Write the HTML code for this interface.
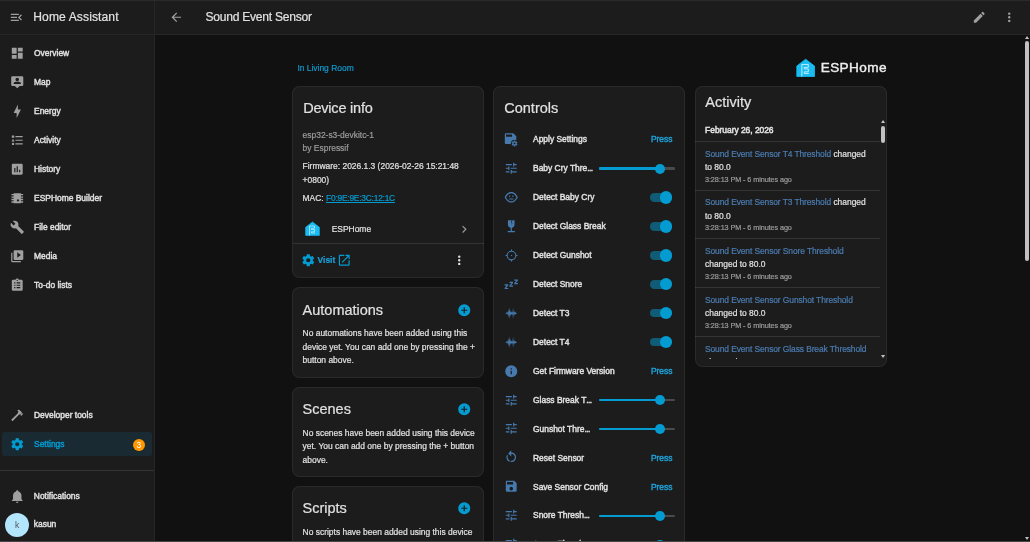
<!DOCTYPE html>
<html><head><meta charset="utf-8"><style>
html,body{margin:0;padding:0;width:1030px;height:542px;overflow:hidden;background:#111;}
body{position:relative;font-family:"Liberation Sans",sans-serif;filter:blur(0.3px);}
.t{position:absolute;white-space:nowrap;line-height:1;-webkit-text-stroke:0.2px;}
.m{-webkit-text-stroke:0.42px;}
svg{display:block}
</style></head><body>
<div style="position:absolute;left:0.00px;top:0.00px;width:1030.00px;height:542.00px;background:#111111;"></div>
<div style="position:absolute;left:154.00px;top:0.00px;width:876.00px;height:34.60px;background:#1c1c1c;"></div>
<div style="position:absolute;left:154.00px;top:33.60px;width:876.00px;height:1.30px;background:rgba(225,225,225,0.055);"></div>
<div style="position:absolute;left:0.00px;top:0.00px;width:154.60px;height:542.00px;background:#1c1c1c;"></div>
<div style="position:absolute;left:153.90px;top:0.00px;width:1.30px;height:542.00px;background:rgba(225,225,225,0.055);"></div>
<div style="position:absolute;left:0.00px;top:33.60px;width:153.90px;height:1.30px;background:rgba(225,225,225,0.055);"></div>
<div style="position:absolute;left:0.00px;top:0.00px;width:1030.00px;height:1.00px;background:#2a2a2a;"></div>
<svg style="position:absolute;left:9.31px;top:9.81px;width:14.79px;height:14.79px" viewBox="0 0 24 24"><path fill="#a0a0a0" d="M21,15.61L19.59,17L14.58,12L19.59,7L21,8.39L17.44,12L21,15.61M3,6H16V8H3V6M3,13V11H13V13H3M3,18V16H16V18H3Z"/></svg>
<div class="t " style="left:33.30px;top:11.37px;font-size:12.080px;color:#e1e1e1;font-weight:400;letter-spacing:0.1px;">Home Assistant</div>
<svg style="position:absolute;left:9.75px;top:46.25px;width:14.50px;height:14.50px" viewBox="0 0 24 24"><path fill="#a0a0a0" d="M13,3V9H21V3M13,21H21V11H13M3,21H11V15H3M3,13H11V3H3V13Z"/></svg>
<div class="t m" style="left:34.00px;top:49.44px;font-size:8.456px;color:#e1e1e1;font-weight:400;">Overview</div>
<svg style="position:absolute;left:9.75px;top:75.24px;width:14.50px;height:14.50px" viewBox="0 0 24 24"><path fill="#a0a0a0" fill-rule="evenodd" d="M12,4.5A3,3 0 0,1 15,7.5A3,3 0 0,1 12,10.5A3,3 0 0,1 9,7.5A3,3 0 0,1 12,4.5M18,15H6V13.5C6,11.8 9.5,11 12,11C14.5,11 18,11.8 18,13.5V15M4,2H20A2,2 0 0,1 22,4V16A2,2 0 0,1 20,18H16L12,22L8,18H4A2,2 0 0,1 2,16V4A2,2 0 0,1 4,2Z"/></svg>
<div class="t m" style="left:34.00px;top:78.43px;font-size:8.456px;color:#e1e1e1;font-weight:400;">Map</div>
<svg style="position:absolute;left:9.75px;top:104.23px;width:14.50px;height:14.50px" viewBox="0 0 24 24"><path fill="#a0a0a0" d="M11 15H6L13 1V9H18L11 23V15Z"/></svg>
<div class="t m" style="left:34.00px;top:107.42px;font-size:8.456px;color:#e1e1e1;font-weight:400;">Energy</div>
<svg style="position:absolute;left:9.75px;top:133.22px;width:14.50px;height:14.50px" viewBox="0 0 24 24"><path fill="#a0a0a0" d="M5,9.5L7.5,14H2.5L5,9.5M3,4H7V8H3V4M5,20A2,2 0 0,0 7,18A2,2 0 0,0 5,16A2,2 0 0,0 3,18A2,2 0 0,0 5,20M9,5V7H21V5H9M9,19H21V17H9V19M9,13H21V11H9V13Z"/></svg>
<div class="t m" style="left:34.00px;top:136.41px;font-size:8.456px;color:#e1e1e1;font-weight:400;">Activity</div>
<svg style="position:absolute;left:9.75px;top:162.21px;width:14.50px;height:14.50px" viewBox="0 0 24 24"><path fill="#a0a0a0" d="M19 3H5C3.9 3 3 3.9 3 5V19C3 20.1 3.9 21 5 21H19C20.1 21 21 20.1 21 19V5C21 3.9 20.1 3 19 3M9 17H7V10H9V17M13 17H11V7H13V17M17 17H15V13H17V17Z"/></svg>
<div class="t m" style="left:34.00px;top:165.40px;font-size:8.456px;color:#e1e1e1;font-weight:400;">History</div>
<svg style="position:absolute;left:9.75px;top:191.20px;width:14.50px;height:14.50px" viewBox="0 0 24 24"><path fill="#a0a0a0" fill-rule="evenodd" d="M6 3.8H18V20.2H6Z M2.3 4.8H6V7.2H2.3Z M2.3 9H6V11.2H2.3Z M2.3 13H6V15.2H2.3Z M2.3 17H6V19.4H2.3Z M18 4.8H21.7V7.2H18Z M18 9H21.7V11.2H18Z M18 13H21.7V15.2H18Z M18 17H21.7V19.4H18Z M11.5 14.2H15V17H11.5Z"/></svg>
<div class="t m" style="left:34.00px;top:194.39px;font-size:8.456px;color:#e1e1e1;font-weight:400;">ESPHome Builder</div>
<svg style="position:absolute;left:9.75px;top:220.19px;width:14.50px;height:14.50px" viewBox="0 0 24 24"><path fill="#a0a0a0" d="M22.7,19L13.6,9.9C14.5,7.6 14,4.9 12.1,3C10.1,1 7.1,0.6 4.7,1.7L9,6L6,9L1.6,4.7C0.4,7.1 0.9,10.1 2.9,12.1C4.8,14 7.5,14.5 9.8,13.6L18.9,22.7C19.3,23.1 19.9,23.1 20.3,22.7L22.6,20.4C23.1,20 23.1,19.3 22.7,19Z"/></svg>
<div class="t m" style="left:34.00px;top:223.38px;font-size:8.456px;color:#e1e1e1;font-weight:400;">File editor</div>
<svg style="position:absolute;left:9.75px;top:249.18px;width:14.50px;height:14.50px" viewBox="0 0 24 24"><path fill="#a0a0a0" d="M4,6H2V20A2,2 0 0,0 4,22H18V20H4V6M20,2H8A2,2 0 0,0 6,4V16A2,2 0 0,0 8,18H20A2,2 0 0,0 22,16V4A2,2 0 0,0 20,2M12,14.5V5.5L18,10L12,14.5Z"/></svg>
<div class="t m" style="left:34.00px;top:252.37px;font-size:8.456px;color:#e1e1e1;font-weight:400;">Media</div>
<svg style="position:absolute;left:9.75px;top:278.17px;width:14.50px;height:14.50px" viewBox="0 0 24 24"><path fill="#a0a0a0" d="M19,3H14.82C14.4,1.84 13.3,1 12,1C10.7,1 9.6,1.84 9.18,3H5A2,2 0 0,0 3,5V19A2,2 0 0,0 5,21H19A2,2 0 0,0 21,19V5A2,2 0 0,0 19,3M12,3A1,1 0 0,1 13,4A1,1 0 0,1 12,5A1,1 0 0,1 11,4A1,1 0 0,1 12,3M7,7H9V9H7V7M7,11H9V13H7V11M7,15H9V17H7V15M11,7H17V9H11V7M11,11H17V13H11V11M11,15H17V17H11V15Z"/></svg>
<div class="t m" style="left:34.00px;top:281.36px;font-size:8.456px;color:#e1e1e1;font-weight:400;">To-do lists</div>
<svg style="position:absolute;left:9.65px;top:408.25px;width:14.50px;height:14.50px" viewBox="0 0 24 24"><path fill="#a0a0a0" d="M2 19.63L13.43 8.2L12.72 7.5L14.14 6.07L12 3.89C13.2 2.7 15.09 2.7 16.27 3.89L19.87 7.5L18.45 8.91H21.29L22 9.62L18.45 13.21L17.74 12.5V9.62L16.27 11.04L15.56 10.33L4.13 21.76L2 19.63Z"/></svg>
<div class="t m" style="left:34.00px;top:411.44px;font-size:8.456px;color:#e1e1e1;font-weight:400;">Developer tools</div>
<div style="position:absolute;left:2.40px;top:432.20px;width:149.50px;height:23.80px;background:#192a33;border-radius:2.5px;"></div>
<svg style="position:absolute;left:9.85px;top:436.95px;width:14.50px;height:14.50px" viewBox="0 0 24 24"><path fill="#039bd0" d="M12,15.5A3.5,3.5 0 0,1 8.5,12A3.5,3.5 0 0,1 12,8.5A3.5,3.5 0 0,1 15.5,12A3.5,3.5 0 0,1 12,15.5M19.43,12.97C19.47,12.65 19.5,12.33 19.5,12C19.5,11.67 19.47,11.34 19.43,11L21.54,9.37C21.73,9.22 21.78,8.95 21.66,8.73L19.66,5.27C19.54,5.05 19.27,4.96 19.05,5.05L16.56,6.05C16.04,5.66 15.5,5.32 14.87,5.07L14.5,2.42C14.46,2.18 14.25,2 14,2H10C9.75,2 9.54,2.18 9.5,2.42L9.13,5.07C8.5,5.32 7.96,5.66 7.44,6.05L4.95,5.05C4.73,4.96 4.46,5.05 4.34,5.27L2.34,8.73C2.21,8.95 2.27,9.22 2.46,9.37L4.57,11C4.53,11.34 4.5,11.67 4.5,12C4.5,12.33 4.53,12.65 4.57,12.97L2.46,14.63C2.27,14.78 2.21,15.05 2.34,15.27L4.34,18.73C4.46,18.95 4.73,19.03 4.95,18.95L7.44,17.94C7.96,18.34 8.5,18.68 9.13,18.93L9.5,21.58C9.54,21.82 9.75,22 10,22H14C14.25,22 14.46,21.82 14.5,21.58L14.87,18.93C15.5,18.67 16.04,18.34 16.56,17.94L19.05,18.95C19.27,19.03 19.54,18.95 19.66,18.73L21.66,15.27C21.78,15.05 21.73,14.78 21.54,14.63L19.43,12.97Z"/></svg>
<div class="t m" style="left:34.00px;top:440.14px;font-size:8.456px;color:#039bd0;font-weight:400;">Settings</div>
<div style="position:absolute;left:132.8px;top:438.5px;width:12.2px;height:12.2px;border-radius:50%;background:#ff9800;color:#fff;-webkit-text-stroke:0;font-size:8.46px;line-height:12.2px;text-align:center;">3</div>
<div style="position:absolute;left:0.00px;top:470.10px;width:154.00px;height:0.70px;background:rgba(225,225,225,0.12);"></div>
<svg style="position:absolute;left:9.65px;top:488.85px;width:14.50px;height:14.50px" viewBox="0 0 24 24"><path fill="#a0a0a0" d="M21,19V20H3V19L5,17V11C5,7.9 7.03,5.17 10,4.29C10,4.19 10,4.1 10,4A2,2 0 0,1 12,2A2,2 0 0,1 14,4C14,4.1 14,4.19 14,4.29C16.97,5.17 19,7.9 19,11V17L21,19M14,21A2,2 0 0,1 12,23A2,2 0 0,1 10,21"/></svg>
<div class="t m" style="left:33.80px;top:491.94px;font-size:8.456px;color:#e1e1e1;font-weight:400;">Notifications</div>
<div style="position:absolute;left:5px;top:512.6px;width:24.1px;height:24.1px;border-radius:50%;background:#b3e5fc;color:#555;font-size:8.46px;line-height:24.1px;text-align:center;">k</div>
<div class="t m" style="left:33.80px;top:520.34px;font-size:8.456px;color:#e1e1e1;font-weight:400;">kasun</div>
<svg style="position:absolute;left:169.05px;top:10.20px;width:14.50px;height:14.50px" viewBox="0 0 24 24"><path fill="#a0a0a0" d="M20,11V13H8L13.5,18.5L12.08,19.92L4.16,12L12.08,4.08L13.5,5.5L8,11H20Z"/></svg>
<div class="t " style="left:205.40px;top:11.37px;font-size:12.080px;color:#e1e1e1;font-weight:400;letter-spacing:-0.24px;">Sound Event Sensor</div>
<svg style="position:absolute;left:972.25px;top:10.10px;width:14.50px;height:14.50px" viewBox="0 0 24 24"><path fill="#a0a0a0" d="M20.71,7.04C21.1,6.65 21.1,6 20.71,5.63L18.37,3.29C18,2.9 17.35,2.9 16.96,3.29L15.12,5.12L18.87,8.87M3,17.25V21H6.75L17.81,9.93L14.06,6.18L3,17.25Z"/></svg>
<svg style="position:absolute;left:1001.75px;top:9.90px;width:14.50px;height:14.50px" viewBox="0 0 24 24"><path fill="#a0a0a0" d="M12,16A2,2 0 0,1 14,18A2,2 0 0,1 12,20A2,2 0 0,1 10,18A2,2 0 0,1 12,16M12,10A2,2 0 0,1 14,12A2,2 0 0,1 12,14A2,2 0 0,1 10,12A2,2 0 0,1 12,10M12,4A2,2 0 0,1 14,6A2,2 0 0,1 12,8A2,2 0 0,1 10,6A2,2 0 0,1 12,4Z"/></svg>
<div style="position:absolute;left:1025.5px;top:41px;width:3.6px;height:19.7px"></div>
<div style="position:absolute;left:1025.20px;top:41.10px;width:4.20px;height:219.60px;background:#c1c1c1;border-radius:2.1px;"></div>
<svg style="position:absolute;left:1025.20px;top:35.80px;width:4.10px;height:3.10px;overflow:visible" viewBox="0 0 4.1 3.1"><polygon fill="#c1c1c1" points="0,3.1 2.05,0 4.1,3.1"/></svg>
<svg style="position:absolute;left:1025.30px;top:536.90px;width:4.00px;height:3.00px;overflow:visible" viewBox="0 0 4.0 3.0"><polygon fill="#c1c1c1" points="0,0 2.0,3.0 4.0,0"/></svg>
<div class="t " style="left:297.40px;top:63.64px;font-size:8.456px;color:#0f98cc;font-weight:400;">In Living Room</div>
<svg style="position:absolute;left:795.7px;top:57.6px;width:19.3px;height:19.3px" viewBox="0 0 24 24"><path fill="#18bcf2" stroke="#18bcf2" stroke-width="1" stroke-linejoin="round" d="M12 1.5L23 10V23H1V10Z"/><path fill="none" stroke="#fff" stroke-width="0.9" d="M7.3 23V8H15.3V11.6H10.3V13.6H15.3V17.2H10.3V19.2H16"/></svg>
<div class="t " style="left:820.70px;top:60.89px;font-size:13.600px;color:#eeeeee;font-weight:400;-webkit-text-stroke:0.4px;letter-spacing:0.4px;">ESPHome</div>
<div style="position:absolute;box-sizing:border-box;left:291.90px;top:85.80px;width:192.10px;height:192.00px;background:#1c1c1c;border-radius:7.5px;border:1px solid rgba(225,225,225,0.07);"></div>
<div class="t " style="left:303.20px;top:100.93px;font-size:14.496px;color:#e1e1e1;font-weight:400;letter-spacing:-0.2px;">Device info</div>
<div class="t " style="left:302.60px;top:130.64px;font-size:8.456px;color:#9b9b9b;font-weight:400;">esp32-s3-devkitc-1</div>
<div class="t " style="left:302.60px;top:144.14px;font-size:8.456px;color:#9b9b9b;font-weight:400;">by Espressif</div>
<div class="t " style="left:302.60px;top:162.24px;font-size:8.456px;color:#e1e1e1;font-weight:400;">Firmware: 2026.1.3 (2026-02-26 15:21:48</div>
<div class="t " style="left:302.60px;top:175.94px;font-size:8.456px;color:#e1e1e1;font-weight:400;">+0800)</div>
<div class="t " style="left:302.60px;top:194.14px;font-size:8.456px;color:#e1e1e1;font-weight:400;">MAC: <span style="color:#039bd0;text-decoration:underline;letter-spacing:-0.25px">F0:9E:9E:3C:12:1C</span></div>
<svg style="position:absolute;left:304.8px;top:221.2px;width:15px;height:15px" viewBox="0 0 24 24"><path fill="#18bcf2" stroke="#18bcf2" stroke-width="1" stroke-linejoin="round" d="M12 1.5L23 10V23H1V10Z"/><path fill="none" stroke="#fff" stroke-width="0.9" d="M7.3 23V8H15.3V11.6H10.3V13.6H15.3V17.2H10.3V19.2H16"/></svg>
<div class="t " style="left:331.70px;top:224.64px;font-size:8.456px;color:#e1e1e1;font-weight:400;">ESPHome</div>
<svg style="position:absolute;left:456.95px;top:221.55px;width:14.50px;height:14.50px" viewBox="0 0 24 24"><path fill="#9b9b9b" d="M8.59,16.58L13.17,12L8.59,7.41L10,6L16,12L10,18L8.59,16.58Z"/></svg>
<div style="position:absolute;left:292.50px;top:243.10px;width:191.50px;height:0.70px;background:rgba(225,225,225,0.12);"></div>
<svg style="position:absolute;left:300.55px;top:253.35px;width:14.50px;height:14.50px" viewBox="0 0 24 24"><path fill="#039bd0" d="M12,15.5A3.5,3.5 0 0,1 8.5,12A3.5,3.5 0 0,1 12,8.5A3.5,3.5 0 0,1 15.5,12A3.5,3.5 0 0,1 12,15.5M19.43,12.97C19.47,12.65 19.5,12.33 19.5,12C19.5,11.67 19.47,11.34 19.43,11L21.54,9.37C21.73,9.22 21.78,8.95 21.66,8.73L19.66,5.27C19.54,5.05 19.27,4.96 19.05,5.05L16.56,6.05C16.04,5.66 15.5,5.32 14.87,5.07L14.5,2.42C14.46,2.18 14.25,2 14,2H10C9.75,2 9.54,2.18 9.5,2.42L9.13,5.07C8.5,5.32 7.96,5.66 7.44,6.05L4.95,5.05C4.73,4.96 4.46,5.05 4.34,5.27L2.34,8.73C2.21,8.95 2.27,9.22 2.46,9.37L4.57,11C4.53,11.34 4.5,11.67 4.5,12C4.5,12.33 4.53,12.65 4.57,12.97L2.46,14.63C2.27,14.78 2.21,15.05 2.34,15.27L4.34,18.73C4.46,18.95 4.73,19.03 4.95,18.95L7.44,17.94C7.96,18.34 8.5,18.68 9.13,18.93L9.5,21.58C9.54,21.82 9.75,22 10,22H14C14.25,22 14.46,21.82 14.5,21.58L14.87,18.93C15.5,18.67 16.04,18.34 16.56,17.94L19.05,18.95C19.27,19.03 19.54,18.95 19.66,18.73L21.66,15.27C21.78,15.05 21.73,14.78 21.54,14.63L19.43,12.97Z"/></svg>
<div class="t " style="left:317.60px;top:256.44px;font-size:8.456px;color:#18a0da;font-weight:700;">Visit</div>
<svg style="position:absolute;left:336.95px;top:253.30px;width:14.50px;height:14.50px" viewBox="0 0 24 24"><path fill="#039bd0" d="M14,3V5H17.59L7.76,14.83L9.17,16.24L19,6.41V10H21V3M19,19H5V5H12V3H5C3.89,3 3,3.9 3,5V19A2,2 0 0,0 5,21H19A2,2 0 0,0 21,19V12H19V19Z"/></svg>
<svg style="position:absolute;left:452.45px;top:253.30px;width:14.50px;height:14.50px" viewBox="0 0 24 24"><path fill="#e1e1e1" d="M12,16A2,2 0 0,1 14,18A2,2 0 0,1 12,20A2,2 0 0,1 10,18A2,2 0 0,1 12,16M12,10A2,2 0 0,1 14,12A2,2 0 0,1 12,14A2,2 0 0,1 10,12A2,2 0 0,1 12,10M12,4A2,2 0 0,1 14,6A2,2 0 0,1 12,8A2,2 0 0,1 10,6A2,2 0 0,1 12,4Z"/></svg>
<div style="position:absolute;box-sizing:border-box;left:291.90px;top:287.20px;width:192.10px;height:90.80px;background:#1c1c1c;border-radius:7.5px;border:1px solid rgba(225,225,225,0.07);"></div>
<div class="t " style="left:302.60px;top:302.63px;font-size:14.496px;color:#e1e1e1;font-weight:400;">Automations</div>
<svg style="position:absolute;left:456.95px;top:302.50px;width:14.50px;height:14.50px" viewBox="0 0 24 24"><path fill="#039bd0" d="M17,13H13V17H11V13H7V11H11V7H13V11H17M12,2A10,10 0 0,0 2,12A10,10 0 0,0 12,22A10,10 0 0,0 22,12A10,10 0 0,0 12,2Z"/></svg>
<div class="t " style="left:302.60px;top:329.24px;font-size:8.456px;color:#e1e1e1;font-weight:400;">No automations have been added using this</div>
<div class="t " style="left:302.60px;top:342.84px;font-size:8.456px;color:#e1e1e1;font-weight:400;">device yet. You can add one by pressing the +</div>
<div class="t " style="left:302.60px;top:356.44px;font-size:8.456px;color:#e1e1e1;font-weight:400;">button above.</div>
<div style="position:absolute;box-sizing:border-box;left:291.90px;top:386.50px;width:192.10px;height:90.80px;background:#1c1c1c;border-radius:7.5px;border:1px solid rgba(225,225,225,0.07);"></div>
<div class="t " style="left:302.60px;top:401.93px;font-size:14.496px;color:#e1e1e1;font-weight:400;">Scenes</div>
<svg style="position:absolute;left:456.95px;top:401.80px;width:14.50px;height:14.50px" viewBox="0 0 24 24"><path fill="#039bd0" d="M17,13H13V17H11V13H7V11H11V7H13V11H17M12,2A10,10 0 0,0 2,12A10,10 0 0,0 12,22A10,10 0 0,0 22,12A10,10 0 0,0 12,2Z"/></svg>
<div class="t " style="left:302.60px;top:428.54px;font-size:8.456px;color:#e1e1e1;font-weight:400;">No scenes have been added using this device</div>
<div class="t " style="left:302.60px;top:442.14px;font-size:8.456px;color:#e1e1e1;font-weight:400;">yet. You can add one by pressing the + button</div>
<div class="t " style="left:302.60px;top:455.74px;font-size:8.456px;color:#e1e1e1;font-weight:400;">above.</div>
<div style="position:absolute;box-sizing:border-box;left:291.90px;top:485.70px;width:192.10px;height:90.80px;background:#1c1c1c;border-radius:7.5px;border:1px solid rgba(225,225,225,0.07);"></div>
<div class="t " style="left:302.60px;top:501.13px;font-size:14.496px;color:#e1e1e1;font-weight:400;">Scripts</div>
<svg style="position:absolute;left:456.95px;top:501.00px;width:14.50px;height:14.50px" viewBox="0 0 24 24"><path fill="#039bd0" d="M17,13H13V17H11V13H7V11H11V7H13V11H17M12,2A10,10 0 0,0 2,12A10,10 0 0,0 12,22A10,10 0 0,0 22,12A10,10 0 0,0 12,2Z"/></svg>
<div class="t " style="left:302.60px;top:527.74px;font-size:8.456px;color:#e1e1e1;font-weight:400;">No scripts have been added using this device</div>
<div class="t " style="left:302.60px;top:541.34px;font-size:8.456px;color:#e1e1e1;font-weight:400;">yet. You can add one by pressing the + button</div>
<div class="t " style="left:302.60px;top:554.94px;font-size:8.456px;color:#e1e1e1;font-weight:400;">above.</div>
<div style="position:absolute;box-sizing:border-box;left:493.10px;top:85.80px;width:192.20px;height:470.00px;background:#1c1c1c;border-radius:7.5px;border:1px solid rgba(225,225,225,0.07);"></div>
<div class="t " style="left:504.30px;top:100.63px;font-size:14.496px;color:#e1e1e1;font-weight:400;">Controls</div>
<svg style="position:absolute;left:503.35px;top:132.05px;width:14.50px;height:14.50px" viewBox="0 0 24 24"><path fill="#4679ad" d="M13 19C13 15.69 15.69 13 19 13C20.1 13 21.12 13.3 22 13.81V7L17 2H5C3.89 2 3 2.89 3 4V18C3 19.1 3.89 20 5 20H13.09C13.04 19.67 13 19.34 13 19M15 4V8H5V4H15M23.8 20.4C23.9 20.4 23.9 20.5 23.8 20.6L22.8 22.3C22.7 22.4 22.6 22.4 22.5 22.4L21.3 21.9C21 22.1 20.8 22.2 20.5 22.4L20.3 23.7C20.3 23.8 20.2 23.9 20.1 23.9H18.1C18 23.9 17.9 23.8 17.9 23.7L17.7 22.4C17.4 22.3 17.1 22.1 16.9 21.9L15.7 22.4C15.6 22.4 15.5 22.4 15.4 22.3L14.4 20.6C14.3 20.5 14.4 20.4 14.4 20.3L15.5 19.5V18.5L14.4 17.7C14.3 17.6 14.3 17.5 14.4 17.4L15.4 15.7C15.5 15.6 15.6 15.6 15.7 15.6L16.9 16.1C17.2 15.9 17.4 15.8 17.7 15.6L17.9 14.3C17.9 14.2 18 14.1 18.1 14.1H20.1C20.2 14.1 20.3 14.2 20.3 14.3L20.5 15.6C20.8 15.7 21.1 15.9 21.4 16.1L22.6 15.6C22.7 15.6 22.9 15.6 22.9 15.7L23.9 17.4C24 17.5 23.9 17.6 23.8 17.7L22.7 18.5V19.5L23.8 20.4M20.6 19C20.6 18.2 19.9 17.5 19.1 17.5S17.6 18.2 17.6 19 18.3 20.5 19.1 20.5 20.6 19.8 20.6 19Z"/></svg>
<div class="t m" style="left:533.00px;top:135.24px;font-size:8.456px;color:#e1e1e1;font-weight:400;">Apply Settings</div>
<div class="t " style="left:650.90px;top:135.24px;font-size:8.456px;color:#1ea0d8;font-weight:400;-webkit-text-stroke:0.42px;">Press</div>
<svg style="position:absolute;left:504.25px;top:160.99px;width:14.50px;height:14.50px" viewBox="0 0 24 24"><path fill="#4679ad" d="M3,17V19H9V17H3M3,5V7H13V5H3M13,21V19H21V17H13V15H11V21H13M7,9V11H3V13H7V15H9V9H7M21,13V11H11V13H21M15,9H17V7H21V5H17V3H15V9Z"/></svg>
<div class="t m" style="left:533.00px;top:164.18px;font-size:8.456px;color:#e1e1e1;font-weight:400;">Baby Cry Thre<span style="letter-spacing:-0.6px">...</span></div>
<div style="position:absolute;left:598.90px;top:167.49px;width:76.00px;height:2.40px;background:#4a4a4a;border-radius:1.2px;"></div>
<div style="position:absolute;left:598.90px;top:167.49px;width:61.00px;height:2.40px;background:#039bd0;border-radius:1.2px;"></div>
<div style="position:absolute;left:654.85px;top:163.74px;width:9.9px;height:9.9px;border-radius:50%;background:#039bd0"></div>
<svg style="position:absolute;left:504.25px;top:189.93px;width:14.50px;height:14.50px" viewBox="0 0 24 24"><path fill="#4679ad" fill-rule="evenodd" d="M1 12 C3 8.5 5 5.5 8 4.2 C9.5 3.6 10.8 3.4 12 3.4 C13.2 3.4 14.5 3.6 16 4.2 C19 5.5 21 8.5 23 12 C21 15.5 19 18.5 16 19.8 C14.5 20.4 13.2 20.6 12 20.6 C10.8 20.6 9.5 20.4 8 19.8 C5 18.5 3 15.5 1 12Z M3.3 12 C5 9.3 6.6 7 8.8 6 C10 5.5 11 5.2 12 5.2 C13 5.2 14 5.5 15.2 6 C17.4 7 19 9.3 20.7 12 C19 14.7 17.4 17 15.2 18 C14 18.5 13 18.8 12 18.8 C11 18.8 10 18.5 8.8 18 C6.6 17 5 14.7 3.3 12Z M9.3 9A1.2 1.2 0 1 0 9.3 11.4A1.2 1.2 0 1 0 9.3 9Z M14.7 9A1.2 1.2 0 1 0 14.7 11.4A1.2 1.2 0 1 0 14.7 9Z M8.6 14.2H15.4V15.9H8.6Z"/></svg>
<div class="t m" style="left:533.00px;top:193.12px;font-size:8.456px;color:#e1e1e1;font-weight:400;">Detect Baby Cry</div>
<div style="position:absolute;left:650.00px;top:193.18px;width:22.00px;height:8.50px;background:rgba(3,155,208,0.5);border-radius:4.25px;"></div>
<div style="position:absolute;left:660.00px;top:191.23px;width:12.4px;height:12.4px;border-radius:50%;background:#039bd0"></div>
<svg style="position:absolute;left:504.25px;top:218.87px;width:14.50px;height:14.50px" viewBox="0 0 24 24"><path fill="#4679ad" d="M6.5 2H17.5V9C17.5 11.8 15.4 14.2 13 14.6V19.8H18V22H6V19.8H11V14.6C8.6 14.2 6.5 11.8 6.5 9V2M12.8 2L11.6 4.8L13 7L11.8 10L14 7L12.6 4.8L14 2Z"/></svg>
<div class="t m" style="left:533.00px;top:222.06px;font-size:8.456px;color:#e1e1e1;font-weight:400;">Detect Glass Break</div>
<div style="position:absolute;left:650.00px;top:222.12px;width:22.00px;height:8.50px;background:rgba(3,155,208,0.5);border-radius:4.25px;"></div>
<div style="position:absolute;left:660.00px;top:220.17px;width:12.4px;height:12.4px;border-radius:50%;background:#039bd0"></div>
<svg style="position:absolute;left:504.98px;top:248.54px;width:13.05px;height:13.05px" viewBox="0 0 24 24"><path fill="#4679ad" d="M3.05,13H1V11H3.05C3.5,6.83 6.83,3.5 11,3.05V1H13V3.05C17.17,3.5 20.5,6.83 20.95,11H23V13H20.95C20.5,17.17 17.17,20.5 13,20.95V23H11V20.95C6.83,20.5 3.5,17.17 3.05,13M12,5A7,7 0 0,0 5,12A7,7 0 0,0 12,19A7,7 0 0,0 19,12A7,7 0 0,0 12,5Z M11 11H13V13H11Z"/></svg>
<div class="t m" style="left:533.00px;top:251.00px;font-size:8.456px;color:#e1e1e1;font-weight:400;">Detect Gunshot</div>
<div style="position:absolute;left:650.00px;top:251.06px;width:22.00px;height:8.50px;background:rgba(3,155,208,0.5);border-radius:4.25px;"></div>
<div style="position:absolute;left:660.00px;top:249.11px;width:12.4px;height:12.4px;border-radius:50%;background:#039bd0"></div>
<svg style="position:absolute;left:504.25px;top:276.75px;width:14.50px;height:14.50px" viewBox="0 0 24 24"><path fill="#4679ad" d="M23,12H17V10L20.39,6H17V4H23V6L19.62,10H23V12M15,16H9V14L12.39,10H9V8H15V10L11.62,14H15V16M7,20H1V18L4.39,14H1V12H7V14L3.62,18H7V20Z"/></svg>
<div class="t m" style="left:533.00px;top:279.94px;font-size:8.456px;color:#e1e1e1;font-weight:400;">Detect Snore</div>
<div style="position:absolute;left:650.00px;top:280.00px;width:22.00px;height:8.50px;background:rgba(3,155,208,0.5);border-radius:4.25px;"></div>
<div style="position:absolute;left:660.00px;top:278.05px;width:12.4px;height:12.4px;border-radius:50%;background:#039bd0"></div>
<svg style="position:absolute;left:504.25px;top:305.69px;width:14.50px;height:14.50px" viewBox="0 0 24 24"><path fill="#4679ad" d="M22 12L20 13L19 14L18 13L17 16L16 13L15 21L14 13L13 15L12 13L11 17L10 13L9 22L8 13L7 19L6 13L5 14L4 13L2 12L4 11L5 10L6 11L7 5L8 11L9 2L10 11L11 7L12 11L13 9L14 11L15 3L16 11L17 8L18 11L19 10L20 11L22 12Z"/></svg>
<div class="t m" style="left:533.00px;top:308.88px;font-size:8.456px;color:#e1e1e1;font-weight:400;">Detect T3</div>
<div style="position:absolute;left:650.00px;top:308.94px;width:22.00px;height:8.50px;background:rgba(3,155,208,0.5);border-radius:4.25px;"></div>
<div style="position:absolute;left:660.00px;top:306.99px;width:12.4px;height:12.4px;border-radius:50%;background:#039bd0"></div>
<svg style="position:absolute;left:504.25px;top:334.63px;width:14.50px;height:14.50px" viewBox="0 0 24 24"><path fill="#4679ad" d="M22 12L20 13L19 14L18 13L17 16L16 13L15 21L14 13L13 15L12 13L11 17L10 13L9 22L8 13L7 19L6 13L5 14L4 13L2 12L4 11L5 10L6 11L7 5L8 11L9 2L10 11L11 7L12 11L13 9L14 11L15 3L16 11L17 8L18 11L19 10L20 11L22 12Z"/></svg>
<div class="t m" style="left:533.00px;top:337.82px;font-size:8.456px;color:#e1e1e1;font-weight:400;">Detect T4</div>
<div style="position:absolute;left:650.00px;top:337.88px;width:22.00px;height:8.50px;background:rgba(3,155,208,0.5);border-radius:4.25px;"></div>
<div style="position:absolute;left:660.00px;top:335.93px;width:12.4px;height:12.4px;border-radius:50%;background:#039bd0"></div>
<svg style="position:absolute;left:504.25px;top:363.57px;width:14.50px;height:14.50px" viewBox="0 0 24 24"><path fill="#4679ad" d="M13,9H11V7H13M13,17H11V11H13M12,2A10,10 0 0,0 2,12A10,10 0 0,0 12,22A10,10 0 0,0 22,12A10,10 0 0,0 12,2Z"/></svg>
<div class="t m" style="left:533.00px;top:366.76px;font-size:8.456px;color:#e1e1e1;font-weight:400;">Get Firmware Version</div>
<div class="t " style="left:650.90px;top:366.76px;font-size:8.456px;color:#1ea0d8;font-weight:400;-webkit-text-stroke:0.42px;">Press</div>
<svg style="position:absolute;left:504.25px;top:392.51px;width:14.50px;height:14.50px" viewBox="0 0 24 24"><path fill="#4679ad" d="M3,17V19H9V17H3M3,5V7H13V5H3M13,21V19H21V17H13V15H11V21H13M7,9V11H3V13H7V15H9V9H7M21,13V11H11V13H21M15,9H17V7H21V5H17V3H15V9Z"/></svg>
<div class="t m" style="left:533.00px;top:395.70px;font-size:8.456px;color:#e1e1e1;font-weight:400;">Glass Break T<span style="letter-spacing:-0.6px">...</span></div>
<div style="position:absolute;left:598.90px;top:399.01px;width:76.00px;height:2.40px;background:#4a4a4a;border-radius:1.2px;"></div>
<div style="position:absolute;left:598.90px;top:399.01px;width:61.00px;height:2.40px;background:#039bd0;border-radius:1.2px;"></div>
<div style="position:absolute;left:654.85px;top:395.26px;width:9.9px;height:9.9px;border-radius:50%;background:#039bd0"></div>
<svg style="position:absolute;left:504.25px;top:421.45px;width:14.50px;height:14.50px" viewBox="0 0 24 24"><path fill="#4679ad" d="M3,17V19H9V17H3M3,5V7H13V5H3M13,21V19H21V17H13V15H11V21H13M7,9V11H3V13H7V15H9V9H7M21,13V11H11V13H21M15,9H17V7H21V5H17V3H15V9Z"/></svg>
<div class="t m" style="left:533.00px;top:424.64px;font-size:8.456px;color:#e1e1e1;font-weight:400;">Gunshot Thre<span style="letter-spacing:-0.6px">...</span></div>
<div style="position:absolute;left:598.90px;top:427.95px;width:76.00px;height:2.40px;background:#4a4a4a;border-radius:1.2px;"></div>
<div style="position:absolute;left:598.90px;top:427.95px;width:61.00px;height:2.40px;background:#039bd0;border-radius:1.2px;"></div>
<div style="position:absolute;left:654.85px;top:424.20px;width:9.9px;height:9.9px;border-radius:50%;background:#039bd0"></div>
<svg style="position:absolute;left:504.25px;top:450.39px;width:14.50px;height:14.50px" viewBox="0 0 24 24"><path fill="#4679ad" d="M12,4C14.1,4 16.1,4.8 17.6,6.3C20.7,9.4 20.7,14.5 17.6,17.6C15.8,19.5 13.3,20.2 10.9,19.9L11.4,17.9C13.1,18.1 14.9,17.5 16.2,16.2C18.5,13.9 18.5,10.1 16.2,7.7C15.1,6.6 13.5,6 12,6V10.6L7,5.6L12,0.6V4M6.3,17.6C3.7,15 3.3,11 5.1,7.9L6.6,9.4C5.5,11.6 5.9,14.4 7.8,16.2C8.3,16.7 8.9,17.1 9.6,17.4L9,19.4C8,19 7.1,18.4 6.3,17.6Z"/></svg>
<div class="t m" style="left:533.00px;top:453.58px;font-size:8.456px;color:#e1e1e1;font-weight:400;">Reset Sensor</div>
<div class="t " style="left:650.90px;top:453.58px;font-size:8.456px;color:#1ea0d8;font-weight:400;-webkit-text-stroke:0.42px;">Press</div>
<svg style="position:absolute;left:504.25px;top:479.33px;width:14.50px;height:14.50px" viewBox="0 0 24 24"><path fill="#4679ad" d="M15,9H5V5H15M12,19A3,3 0 0,1 9,16A3,3 0 0,1 12,13A3,3 0 0,1 15,16A3,3 0 0,1 12,19M17,3H5C3.89,3 3,3.9 3,5V19A2,2 0 0,0 5,21H19A2,2 0 0,0 21,19V7L17,3Z"/></svg>
<div class="t m" style="left:533.00px;top:482.52px;font-size:8.456px;color:#e1e1e1;font-weight:400;">Save Sensor Config</div>
<div class="t " style="left:650.90px;top:482.52px;font-size:8.456px;color:#1ea0d8;font-weight:400;-webkit-text-stroke:0.42px;">Press</div>
<svg style="position:absolute;left:504.25px;top:508.27px;width:14.50px;height:14.50px" viewBox="0 0 24 24"><path fill="#4679ad" d="M3,17V19H9V17H3M3,5V7H13V5H3M13,21V19H21V17H13V15H11V21H13M7,9V11H3V13H7V15H9V9H7M21,13V11H11V13H21M15,9H17V7H21V5H17V3H15V9Z"/></svg>
<div class="t m" style="left:533.00px;top:511.46px;font-size:8.456px;color:#e1e1e1;font-weight:400;">Snore Thresh<span style="letter-spacing:-0.6px">...</span></div>
<div style="position:absolute;left:598.90px;top:514.77px;width:76.00px;height:2.40px;background:#4a4a4a;border-radius:1.2px;"></div>
<div style="position:absolute;left:598.90px;top:514.77px;width:61.00px;height:2.40px;background:#039bd0;border-radius:1.2px;"></div>
<div style="position:absolute;left:654.85px;top:511.02px;width:9.9px;height:9.9px;border-radius:50%;background:#039bd0"></div>
<svg style="position:absolute;left:504.25px;top:537.21px;width:14.50px;height:14.50px" viewBox="0 0 24 24"><path fill="#4679ad" d="M3,17V19H9V17H3M3,5V7H13V5H3M13,21V19H21V17H13V15H11V21H13M7,9V11H3V13H7V15H9V9H7M21,13V11H11V13H21M15,9H17V7H21V5H17V3H15V9Z"/></svg>
<div class="t m" style="left:533.00px;top:540.40px;font-size:8.456px;color:#e1e1e1;font-weight:400;">Snore Thresh<span style="letter-spacing:-0.6px">...</span></div>
<div style="position:absolute;left:598.90px;top:543.71px;width:76.00px;height:2.40px;background:#4a4a4a;border-radius:1.2px;"></div>
<div style="position:absolute;left:598.90px;top:543.71px;width:61.00px;height:2.40px;background:#039bd0;border-radius:1.2px;"></div>
<div style="position:absolute;left:654.85px;top:539.96px;width:9.9px;height:9.9px;border-radius:50%;background:#039bd0"></div>
<div style="position:absolute;box-sizing:border-box;left:694.60px;top:85.60px;width:192.30px;height:281.90px;background:#1c1c1c;border-radius:7.5px;border:1px solid rgba(225,225,225,0.07);"></div>
<div class="t " style="left:705.30px;top:95.23px;font-size:14.496px;color:#e1e1e1;font-weight:400;">Activity</div>
<div class="t " style="left:705.10px;top:125.54px;font-size:8.456px;color:#e1e1e1;font-weight:400;-webkit-text-stroke:0.5px;letter-spacing:-0.03px;">February 26, 2026</div>
<div style="position:absolute;left:694.60px;top:140.80px;width:185.50px;height:0.80px;background:rgba(225,225,225,0.12);"></div>
<div style="position:absolute;left:695.1px;top:120px;width:186px;height:239px;overflow:hidden">
<div class="t" style="left:9.90px;top:29.74px;font-size:8.456px;color:#e1e1e1;font-weight:400"><span style="color:#4b7cb0;letter-spacing:-0.1px">Sound Event Sensor T4 Threshold</span> changed</div>
<div class="t" style="left:9.90px;top:42.84px;font-size:8.456px;color:#e1e1e1;font-weight:400">to 80.0</div>
<div class="t" style="left:9.90px;top:55.76px;font-size:7.248px;color:#9b9b9b;font-weight:400"><span style="letter-spacing:-0.08px">3:28:13 PM - 6 minutes ago</span></div>
<div style="position:absolute;left:0;top:69.50px;width:185px;height:0.7px;background:rgba(225,225,225,0.12)"></div>
<div class="t" style="left:9.90px;top:78.44px;font-size:8.456px;color:#e1e1e1;font-weight:400"><span style="color:#4b7cb0;letter-spacing:-0.1px">Sound Event Sensor T3 Threshold</span> changed</div>
<div class="t" style="left:9.90px;top:91.54px;font-size:8.456px;color:#e1e1e1;font-weight:400">to 80.0</div>
<div class="t" style="left:9.90px;top:104.46px;font-size:7.248px;color:#9b9b9b;font-weight:400"><span style="letter-spacing:-0.08px">3:28:13 PM - 6 minutes ago</span></div>
<div style="position:absolute;left:0;top:118.20px;width:185px;height:0.7px;background:rgba(225,225,225,0.12)"></div>
<div class="t" style="left:9.90px;top:127.14px;font-size:8.456px;color:#e1e1e1;font-weight:400"><span style="color:#4b7cb0;letter-spacing:-0.1px">Sound Event Sensor Snore Threshold</span></div>
<div class="t" style="left:9.90px;top:140.24px;font-size:8.456px;color:#e1e1e1;font-weight:400">changed to 80.0</div>
<div class="t" style="left:9.90px;top:153.16px;font-size:7.248px;color:#9b9b9b;font-weight:400"><span style="letter-spacing:-0.08px">3:28:13 PM - 6 minutes ago</span></div>
<div style="position:absolute;left:0;top:166.90px;width:185px;height:0.7px;background:rgba(225,225,225,0.12)"></div>
<div class="t" style="left:9.90px;top:175.84px;font-size:8.456px;color:#e1e1e1;font-weight:400"><span style="color:#4b7cb0;letter-spacing:-0.1px">Sound Event Sensor Gunshot Threshold</span></div>
<div class="t" style="left:9.90px;top:188.94px;font-size:8.456px;color:#e1e1e1;font-weight:400">changed to 80.0</div>
<div class="t" style="left:9.90px;top:201.86px;font-size:7.248px;color:#9b9b9b;font-weight:400"><span style="letter-spacing:-0.08px">3:28:13 PM - 6 minutes ago</span></div>
<div style="position:absolute;left:0;top:215.60px;width:185px;height:0.7px;background:rgba(225,225,225,0.12)"></div>
<div class="t" style="left:9.90px;top:224.54px;font-size:8.456px;color:#e1e1e1;font-weight:400"><span style="color:#4b7cb0;letter-spacing:-0.1px">Sound Event Sensor Glass Break Threshold</span></div>
<div class="t" style="left:9.90px;top:237.64px;font-size:8.456px;color:#e1e1e1;font-weight:400">changed to 80.0</div>
<div class="t" style="left:9.90px;top:250.56px;font-size:7.248px;color:#9b9b9b;font-weight:400"><span style="letter-spacing:-0.08px">3:28:13 PM - 6 minutes ago</span></div>
</div>
<div style="position:absolute;left:880.80px;top:125.50px;width:4.10px;height:17.70px;background:#c1c1c1;border-radius:2px;"></div>
<svg style="position:absolute;left:880.80px;top:120.20px;width:4.10px;height:2.90px;overflow:visible" viewBox="0 0 4.1 2.9"><polygon fill="#c1c1c1" points="0,2.9 2.05,0 4.1,2.9"/></svg>
<svg style="position:absolute;left:880.80px;top:355.00px;width:4.10px;height:2.90px;overflow:visible" viewBox="0 0 4.1 2.9"><polygon fill="#c1c1c1" points="0,0 2.05,2.9 4.1,0"/></svg>
<div style="position:absolute;left:0.00px;top:540.90px;width:1030.00px;height:1.50px;background:#464646;"></div>
</body></html>
